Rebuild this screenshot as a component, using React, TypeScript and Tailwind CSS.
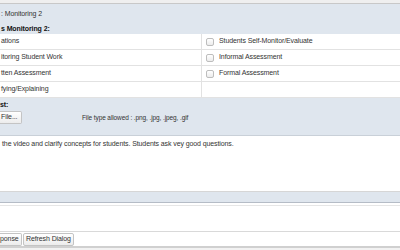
import React from 'react';

const rows: [string, string | null][] = [
  ['ations', 'Students Self-Monitor/Evaluate'],
  ['itoring Student Work', 'Informal Assessment'],
  ['tten Assessment', 'Formal Assessment'],
  ['fying/Explaining', null],
];

function Box() {
  return <span className="inline-block w-[8px] h-[8px] rounded-[2px] border border-[#bdbdbd] bg-gradient-to-b from-white to-[#ececec]" />;
}

export default function App() {
  return (
    <div className="w-[400px] h-[250px] overflow-hidden bg-white text-[7px] tracking-[-0.1px] text-[#333] font-['Liberation_Sans',Arial,sans-serif] flex flex-col">
      <div className="h-[4px] bg-[#efefef] border-b border-[#c8c8c8]" />
      <div className="h-[30px] bg-[#dfe6ee] flex flex-col pl-[1px]">
        <div className="h-[20px] flex items-center pt-[1px]">: Monitoring 2</div>
        <div className="h-[10px] flex items-center font-bold text-[#111]">s Monitoring 2:</div>
      </div>
      <div className="flex flex-col">
        {rows.map(([l, r], i) => (
          <div key={i} className="h-[16px] flex border-b border-[#e2e2e2]">
            <div className="w-[202px] flex items-center pl-[1px] border-r border-[#e2e2e2]">{l}</div>
            <div className="flex-1 flex items-center gap-[5px] pl-[4px]">
              {r && <Box />}
              {r && <span>{r}</span>}
            </div>
          </div>
        ))}
      </div>
      <div className="h-[38px] bg-[#dfe6ee] flex flex-col pt-[2px] border-b border-[#c9d0d8]">
        <div className="font-bold text-[#111] h-[10px] flex items-center">st:</div>
        <div className="flex items-center mt-[1px]">
          <button className="h-[13px] w-[22px] pl-[1px] text-left border border-[#c4c4c4] rounded-r-[2px] bg-gradient-to-b from-white to-[#ececec] border-l-0">File...</button>
          <span className="ml-[60px] text-[6.5px]">File type allowed : .png, .jpg, .jpeg, .gif</span>
        </div>
      </div>
      <div className="h-[55px] pl-[2px] pt-[3px]">the video and clarify concepts for students. Students ask vey good questions.</div>
      <div className="h-[12px] bg-[#dfe6ee] border-t border-[#d6d6d6] border-b border-b-[#b5bcc6]" />
      <div className="h-[27px] border-t border-[#e6e6e6] mt-[2px] border-b border-b-[#d9d9d9]" />
      <div className="h-[14px] flex items-center gap-[1px]">
        <button className="h-[13px] w-[22px] text-left border border-[#c4c4c4] border-l-0 rounded-r-[2px] bg-gradient-to-b from-white to-[#ececec]">ponse</button>
        <button className="h-[13px] px-[2px] border border-[#c4c4c4] rounded-[2px] bg-gradient-to-b from-white to-[#ececec]">Refresh Dialog</button>
      </div>
      <div className="flex-1 border-t-2 border-[#d0d0d0] bg-[#f2f2f2]" />
    </div>
  );
}
